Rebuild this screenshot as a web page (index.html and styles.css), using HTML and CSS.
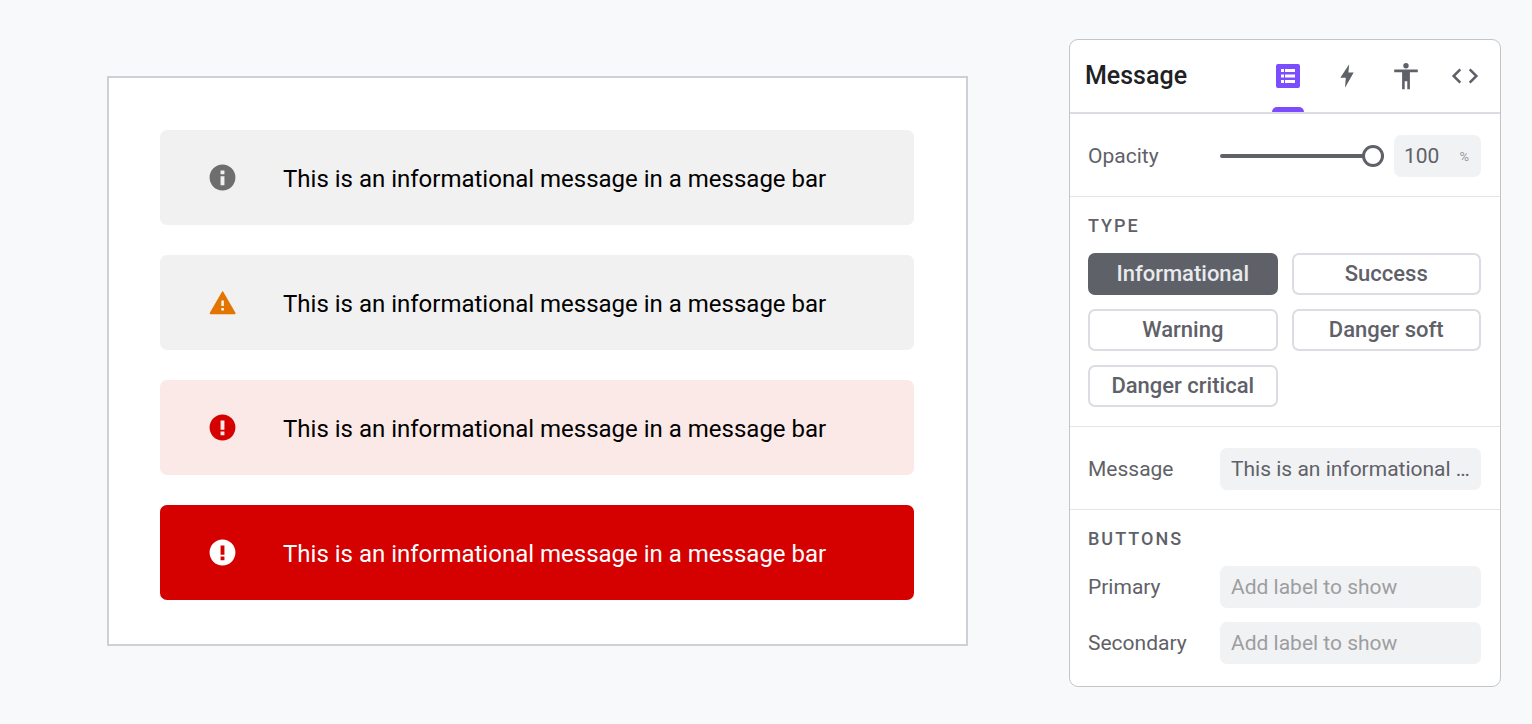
FILE: index.html
```html
<!DOCTYPE html>
<html lang="en">
<head>
<meta charset="utf-8">
<title>Message component</title>
<link rel="stylesheet" href="styles.css">
</head>
<body>
<main class="workspace">
  <section class="preview" aria-label="Message bar preview">
    <div class="bar bar-neutral">
      <svg class="bar-icon icon-info" viewBox="0 0 24 24" aria-hidden="true"><path d="M12 2a10 10 0 1 0 0 20 10 10 0 0 0 0-20zm1.500 16h-3v-7h3zm0-8.500h-3v-3h3z"/></svg>
      <p class="bar-text">This is an informational message in a message bar</p>
    </div>
    <div class="bar bar-neutral">
      <svg class="bar-icon icon-warning" viewBox="0 0 24 24" aria-hidden="true"><path d="M2.700 21h18.800c.6 0 .8-.5.5-1L12.700 3.800c-.3-.6-.9-.6-1.200 0L2.200 20c-.3.500-.1 1 .5 1zM13.100 18.200h-2v-2h2zm0-3.500h-2v-4.200h2z"/></svg>
      <p class="bar-text">This is an informational message in a message bar</p>
    </div>
    <div class="bar bar-soft">
      <svg class="bar-icon icon-danger" viewBox="0 0 24 24" aria-hidden="true"><path d="M12 2a10 10 0 1 0 0 20 10 10 0 0 0 0-20zm1.500 16h-3v-3h3zm0-4.200h-3v-7.300h3z"/></svg>
      <p class="bar-text">This is an informational message in a message bar</p>
    </div>
    <div class="bar bar-critical">
      <svg class="bar-icon" viewBox="0 0 24 24" aria-hidden="true"><path d="M12 2a10 10 0 1 0 0 20 10 10 0 0 0 0-20zm1.500 16h-3v-3h3zm0-4.200h-3v-7.300h3z"/></svg>
      <p class="bar-text">This is an informational message in a message bar</p>
    </div>
  </section>

  <aside class="panel">
    <header class="panel-header">
      <h1 class="panel-title">Message</h1>
      <nav class="tabs" aria-label="Panel views">
        <button class="tab tab-active" type="button" aria-label="Properties">
          <svg class="tab-icon" viewBox="0 0 32 32"><path fill-rule="evenodd" d="M6 4h20a2 2 0 0 1 2 2v20a2 2 0 0 1-2 2H6a2 2 0 0 1-2-2V6a2 2 0 0 1 2-2zm3 5v3h3V9zm4 0v3h10V9zM9 14.500v3h3v-3zm4 0v3h10v-3zM9 20v3h3v-3zm4 0v3h10v-3z"/></svg>
        </button>
        <button class="tab" type="button" aria-label="Interactions">
          <svg class="tab-icon" viewBox="0 0 32 32"><path d="M18.200 4.200 17.400 12.500H22.700L14 27.800 14.800 17.800H9.300z"/></svg>
        </button>
        <button class="tab" type="button" aria-label="Accessibility">
          <svg class="tab-icon" viewBox="0 0 32 32"><circle cx="16" cy="5.700" r="2.700"/><path d="M4.200 9.500h23.600v2.700h-7.900v17h-2.600v-8h-2.600v8h-2.600v-17H4.200z"/></svg>
        </button>
        <button class="tab" type="button" aria-label="Code">
          <svg class="tab-icon tab-icon-line" viewBox="0 0 32 32"><path d="M11.300 9.300l-6.700 6.700 6.700 6.700M20.700 9.300l6.700 6.700-6.700 6.700"/></svg>
        </button>
      </nav>
    </header>

    <section class="group">
      <div class="row">
        <label class="label" for="opacity">Opacity</label>
        <div class="opacity">
          <input class="slider" id="opacity" type="range" min="0" max="100" value="100">
          <div class="amount">
            <input class="amount-input" type="text" value="100" aria-label="Opacity percentage">
            <span class="unit">%</span>
          </div>
        </div>
      </div>
    </section>

    <section class="group group-titled">
      <h2 class="heading">TYPE</h2>
      <div class="types">
        <button class="type type-selected" type="button">Informational</button>
        <button class="type" type="button">Success</button>
        <button class="type" type="button">Warning</button>
        <button class="type" type="button">Danger soft</button>
        <button class="type" type="button">Danger critical</button>
      </div>
    </section>

    <section class="group">
      <div class="row">
        <label class="label" for="message">Message</label>
        <input class="field" id="message" type="text" value="This is an informational message">
      </div>
    </section>

    <section class="group group-titled group-last">
      <h2 class="heading">BUTTONS</h2>
      <div class="rows">
        <div class="row">
          <label class="label" for="primary">Primary</label>
          <input class="field" id="primary" type="text" placeholder="Add label to show">
        </div>
        <div class="row">
          <label class="label" for="secondary">Secondary</label>
          <input class="field" id="secondary" type="text" placeholder="Add label to show">
        </div>
      </div>
    </section>
  </aside>
</main>
</body>
</html>
```
FILE: styles.css
```css
* {
  box-sizing: border-box;
}

body {
  margin: 0;
  background: #f8f9fb;
  color: #5f6168;
  font-family: Roboto, "Liberation Sans", sans-serif;
}

h1, h2, p {
  margin: 0;
}

button, input {
  margin: 0;
  font-family: inherit;
  color: inherit;
}

.workspace {
  display: flex;
  align-items: flex-start;
  gap: 101px;
  padding: 39px 31px 37px 107px;
}

.preview {
  flex: 1;
  display: flex;
  flex-direction: column;
  gap: 30px;
  margin-top: 37px;
  padding: 52px 52px 44px 51px;
  background: #fff;
  border: 2px solid #cfd0d5;
}

.bar {
  display: flex;
  align-items: center;
  gap: 45px;
  min-height: 95px;
  padding: 0 47px;
  border-radius: 7px;
  color: #000;
}

.bar-neutral {
  background: #f1f1f1;
}

.bar-soft {
  background: #fbe9e7;
}

.bar-critical {
  background: #d50000;
  color: #fff;
}

.bar-icon {
  flex: none;
  width: 31px;
  height: 31px;
  fill: currentColor;
}

.icon-info {
  color: #6e6e6e;
}

.icon-warning {
  color: #e37400;
}

.icon-danger {
  color: #d50000;
}

.bar-text {
  padding-top: 2px;
  font-size: 24px;
  line-height: 32px;
}

.panel {
  flex: none;
  width: 432px;
  background: #fff;
  border: 1px solid #c4c5c9;
  border-radius: 9px;
}

.panel-header {
  display: flex;
  justify-content: space-between;
  padding: 0 19px 0 15px;
  border-bottom: 2px solid #dcdce2;
}

.panel-title {
  color: #202124;
  font-size: 25px;
  font-weight: 500;
  line-height: 72px;
}

.tabs {
  display: flex;
  gap: 27px;
}

.tab {
  display: flex;
  align-items: center;
  justify-content: center;
  width: 32px;
  padding: 0;
  background: none;
  border: 0;
  color: #5f6168;
}

.tab-active {
  position: relative;
  color: #7c4dff;
}

.tab-active::after {
  content: "";
  position: absolute;
  right: 0;
  bottom: 0;
  left: 0;
  height: 5px;
  border-radius: 5px 5px 0 0;
  background: #7c4dff;
}

.tab-icon {
  width: 32px;
  height: 32px;
  fill: currentColor;
}

.tab-icon-line {
  fill: none;
  stroke: currentColor;
  stroke-width: 2.500;
}

.group {
  padding: 21px 19px 19px 18px;
  border-bottom: 1px solid #e4e5e7;
}

.group-titled {
  padding-top: 16px;
}

.group-last {
  padding-bottom: 22px;
  border-bottom: 0;
}

.heading {
  margin-bottom: 14px;
  font-size: 18px;
  font-weight: 500;
  line-height: 26px;
  letter-spacing: 2px;
}

.rows {
  display: grid;
  gap: 14px;
}

.row {
  display: grid;
  grid-template-columns: 132px 1fr;
  align-items: center;
}

.label {
  font-size: 21px;
  line-height: 28px;
}

.opacity {
  display: flex;
  align-items: center;
  gap: 10px;
}

.slider {
  flex: 1;
  min-width: 0;
  height: 22px;
  appearance: none;
  background: none;
}

.slider::-webkit-slider-runnable-track {
  height: 4px;
  border-radius: 2px;
  background: #5f6168;
}

.slider::-webkit-slider-thumb {
  appearance: none;
  width: 22px;
  height: 22px;
  margin-top: -9px;
  border: 3px solid #5f6168;
  border-radius: 50%;
  background: #fff;
}

.amount {
  display: flex;
  align-items: center;
  width: 87px;
  height: 42px;
  padding: 0 12px 0 10px;
  border-radius: 7px;
  background: #f1f2f4;
}

.amount-input {
  flex: 1;
  min-width: 0;
  padding: 0;
  border: 0;
  background: none;
  font-size: 21px;
}

.unit {
  color: #9a9b9f;
  font-size: 13px;
}

.types {
  display: grid;
  grid-template-columns: 1fr 1fr;
  gap: 14px;
}

.type {
  height: 42px;
  padding: 0 0 2px;
  border: 2px solid #dcdce2;
  border-radius: 7px;
  background: #fff;
  font-size: 22px;
  font-weight: 500;
}

.type-selected {
  border-color: #5f6168;
  background: #5f6168;
  color: #e8eaed;
}

.field {
  width: 100%;
  height: 42px;
  padding: 0 11px;
  border: 0;
  border-radius: 7px;
  background: #f1f2f4;
  font-size: 21px;
  text-overflow: ellipsis;
}

.field::placeholder {
  color: #9d9ea1;
}
```
